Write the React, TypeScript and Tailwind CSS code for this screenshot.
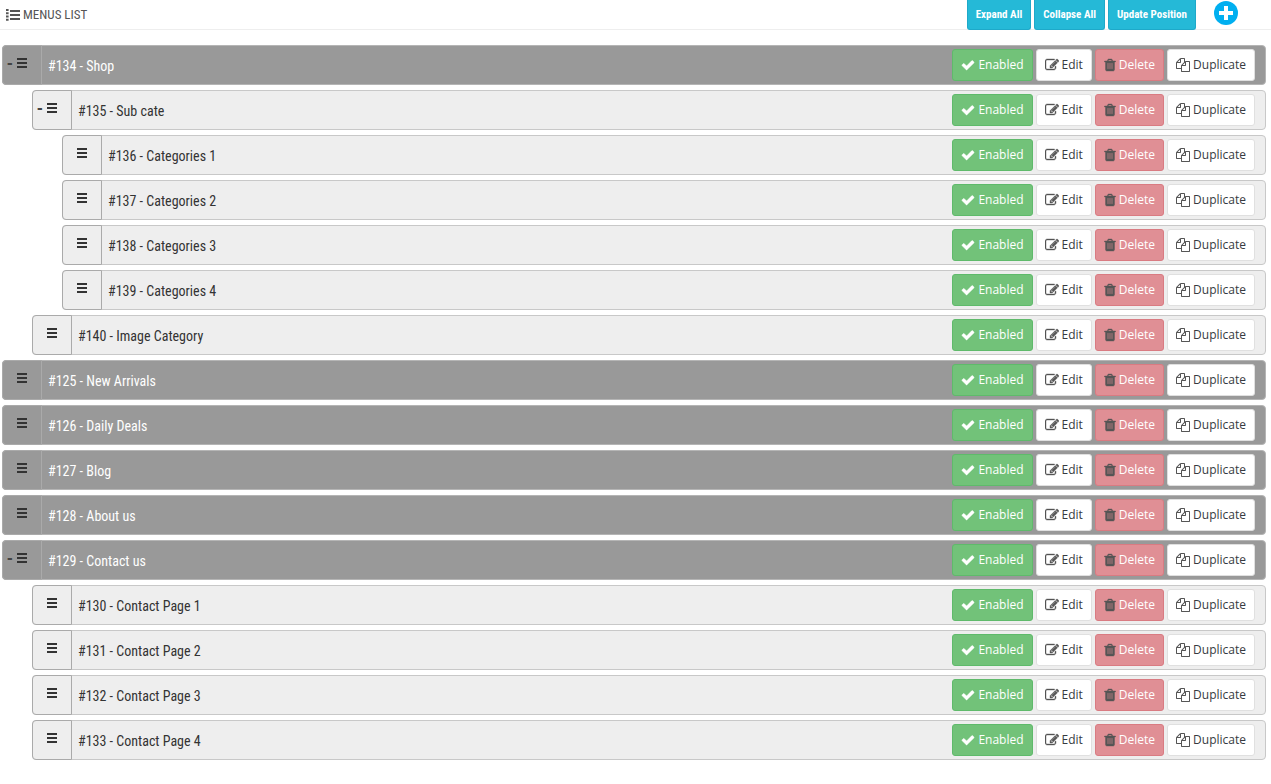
import React, { useState } from 'react';

interface MenuItem {
  id: number;
  name: string;
  children?: MenuItem[];
}

const MENUS: MenuItem[] = [
  {
    id: 134,
    name: 'Shop',
    children: [
      {
        id: 135,
        name: 'Sub cate',
        children: [
          { id: 136, name: 'Categories 1' },
          { id: 137, name: 'Categories 2' },
          { id: 138, name: 'Categories 3' },
          { id: 139, name: 'Categories 4' },
        ],
      },
      { id: 140, name: 'Image Category' },
    ],
  },
  { id: 125, name: 'New Arrivals' },
  { id: 126, name: 'Daily Deals' },
  { id: 127, name: 'Blog' },
  { id: 128, name: 'About us' },
  {
    id: 129,
    name: 'Contact us',
    children: [
      { id: 130, name: 'Contact Page 1' },
      { id: 131, name: 'Contact Page 2' },
      { id: 132, name: 'Contact Page 3' },
      { id: 133, name: 'Contact Page 4' },
    ],
  },
];

const PARENT_IDS = [134, 135, 129];

const ICONS = {
  check:
    'M1671 566q0 40-28 68l-724 724-136 136q-28 28-68 28t-68-28l-136-136-362-362q-28-28-28-68t28-68l136-136q28-28 68-28t68 28l294 295 656-657q28-28 68-28t68 28l136 136q28 28 28 68z',
  edit:
    'M888 1184l116-116-152-152-116 116v56h96v96h56zm440-720q-16-16-33 1l-350 350q-17 17-1 33t33-1l350-350q17-17 1-33zm80 594v190q0 119-84.5 203.5t-203.5 84.5h-832q-119 0-203.5-84.5t-84.5-203.5v-832q0-119 84.5-203.5t203.5-84.5h832q63 0 117 25 15 7 18 23 3 17-9 29l-49 49q-14 14-32 8-23-6-45-6h-832q-66 0-113 47t-47 113v832q0 66 47 113t113 47h832q66 0 113-47t47-113v-126q0-13 9-22l64-64q15-15 35-7t20 29zm-96-738l288 288-672 672h-288v-288zm444 132l-92 92-288-288 92-92q28-28 68-28t68 28l152 152q28 28 28 68t-28 68z',
  trash:
    'M704 1376v-704q0-14-9-23t-23-9h-64q-14 0-23 9t-9 23v704q0 14 9 23t23 9h64q14 0 23-9t9-23zm256 0v-704q0-14-9-23t-23-9h-64q-14 0-23 9t-9 23v704q0 14 9 23t23 9h64q14 0 23-9t9-23zm256 0v-704q0-14-9-23t-23-9h-64q-14 0-23 9t-9 23v704q0 14 9 23t23 9h64q14 0 23-9t9-23zm-544-992h448l-48-117q-7-9-17-11h-317q-10 2-17 11zm928 32v64q0 14-9 23t-23 9h-96v948q0 83-47 143.5t-113 60.5h-832q-66 0-113-58.5t-47-141.5v-952h-96q-14 0-23-9t-9-23v-64q0-14 9-23t23-9h309l70-167q15-37 54-63t79-26h320q40 0 79 26t54 63l70 167h309q14 0 23 9t9 23z',
  copy:
    'M1696 384q40 0 68 28t28 68v1216q0 40-28 68t-68 28h-960q-40 0-68-28t-28-68v-288h-544q-40 0-68-28t-28-68v-672q0-40 20-88t48-76l408-408q28-28 76-48t88-20h416q40 0 68 28t28 68v328q68-40 128-40h416zm-544 213l-299 299h299v-299zm-640-384l-299 299h299v-299zm196 647l316-316v-416h-384v416q0 40-28 68t-68 28h-416v640h512v-256q0-40 20-88t48-76zm956 804v-1152h-384v416q0 40-28 68t-68 28h-416v640h896z',
};

const Icon: React.FC<{ name: keyof typeof ICONS; className?: string; viewBox?: string; weight?: number }> = ({
  name,
  className,
  viewBox = '0 0 1792 1792',
  weight = 0,
}) => (
  <svg
    viewBox={viewBox}
    fill="currentColor"
    stroke="currentColor"
    strokeWidth={weight}
    aria-hidden="true"
    className={`shrink-0 ${className}`}
  >
    <path d={ICONS[name]} />
  </svg>
);

const RowActions: React.FC<{ enabled: boolean; onToggle: () => void }> = ({ enabled, onToggle }) => {
  const base = 'flex h-8 items-center gap-[3px] rounded-[3px] border px-2 text-[12px] leading-5 whitespace-nowrap cursor-pointer';

  return (
    <div className="flex shrink-0 items-center gap-[3px] pr-2.5 font-['Open_Sans',sans-serif]">
      <button onClick={onToggle} className={`${base} border-[#5fba6b] bg-[#72c279] text-white`}>
        <Icon name="check" weight={60} className="size-3.5" />
        {enabled ? 'Enabled' : 'Disabled'}
      </button>
      <button className={`${base} border-[#e0e0e0] bg-white text-[#363a41]`}>
        <Icon name="edit" weight={50} className="size-3.5 text-[#555]" />
        Edit
      </button>
      <button className={`${base} border-[#d97b82] bg-[#e08f95] text-white`}>
        <Icon name="trash" weight={50} viewBox="160 0 1472 1792" className="h-3.5 w-3 text-[#555]" />
        Delete
      </button>
      <button className={`${base} border-[#e0e0e0] bg-white text-[#363a41]`}>
        <Icon name="copy" className="size-3.5 text-[#555]" />
        Duplicate
      </button>
    </div>
  );
};

interface MenuRowProps {
  item: MenuItem;
  level: number;
  collapsed: number[];
  disabled: number[];
  onCollapse: (id: number) => void;
  onToggle: (id: number) => void;
}

const MenuRow: React.FC<MenuRowProps> = (props) => {
  const { item, level, collapsed, disabled, onCollapse, onToggle } = props;
  const root = level === 0;
  const closed = collapsed.includes(item.id);

  return (
    <li>
      <div
        className={`mb-[5px] flex h-10 items-stretch rounded-[4px] border ${
          root ? 'border-[#b5b5b5] bg-[#999] text-white' : 'border-[#c8c8c8] bg-[#eee] text-[#333]'
        }`}
      >
        <div
          className={`-my-px -ml-px flex w-10 shrink-0 items-center rounded-l-[4px] border border-[#aaa] pb-1 pl-1 ${
            root ? 'bg-[#999]' : 'bg-[#eee]'
          }`}
        >
          <div className="w-2.5">
            {item.children && (
              <button
                aria-label={closed ? 'Expand' : 'Collapse'}
                onClick={() => onCollapse(item.id)}
                className="block font-['Liberation_Sans',sans-serif] text-[17px] leading-5 font-bold text-[#444] cursor-pointer"
              >
                {closed ? '+' : '-'}
              </button>
            )}
          </div>
          <svg viewBox="0 0 10 10" fill="#333" shapeRendering="crispEdges" aria-hidden="true" className="size-2.5 cursor-move">
            <path d="M0 0h10v2H0zM0 4h10v2H0zM0 8h10v2H0z" />
          </svg>
        </div>
        <div className="flex min-w-0 flex-1 items-center truncate pt-0.5 pl-1.5">
          #{item.id} - {item.name}
        </div>
        <RowActions enabled={!disabled.includes(item.id)} onToggle={() => onToggle(item.id)} />
      </div>

      {item.children && !closed && (
        <ul className="pl-[30px]">
          {item.children.map((child) => (
            <MenuRow key={child.id} {...props} item={child} level={level + 1} />
          ))}
        </ul>
      )}
    </li>
  );
};

const App: React.FC = () => {
  const [collapsed, setCollapsed] = useState<number[]>([]);
  const [disabled, setDisabled] = useState<number[]>([]);

  const flip = (list: number[], id: number) =>
    list.includes(id) ? list.filter((x) => x !== id) : [...list, id];

  const toolButton =
    'h-[30px] rounded-b-[3px] border border-t-0 border-[#1ea9c9] bg-[#25b9d7] px-2 text-[11px] font-bold text-white cursor-pointer';

  return (
    <div className="min-h-screen bg-white pb-5 font-['Ubuntu_Condensed','Roboto_Condensed',sans-serif] text-[14px] leading-5">
      <header className="flex h-[30px] items-start justify-between border-b border-[#eee] pr-[33px]">
        <h1 className="flex h-[30px] items-center gap-[3px] pl-1.5 text-[13px] text-[#555]">
          <svg viewBox="0 0 14 12" fill="#555" aria-hidden="true" className="h-3 w-3.5">
            <path d="M0 0h2.6v2H0zM0 3.2h2.6v2H0zM0 6.5h2.6v2H0zM0 9.8h2.6v2H0zM4 1h10v2H4zM4 5h10v2H4zM4 9h10v2H4z" />
          </svg>
          MENUS LIST
        </h1>
        <div className="flex items-start gap-[3px]">
          <button className={toolButton} onClick={() => setCollapsed([])}>
            Expand All
          </button>
          <button className={toolButton} onClick={() => setCollapsed(PARENT_IDS)}>
            Collapse All
          </button>
          <button className={toolButton}>Update Position</button>
          <button aria-label="Add menu" className="ml-[15px] mt-px cursor-pointer">
            <svg viewBox="0 0 24 24" aria-hidden="true" className="size-6">
              <circle cx="12" cy="12" r="12" fill="#00aff0" />
              <path d="M12 5v14M5 12h14" stroke="#fff" strokeWidth="4" />
            </svg>
          </button>
        </div>
      </header>

      <ul className="pt-[15px] pr-[5px] pl-0.5">
        {MENUS.map((item) => (
          <MenuRow
            key={item.id}
            item={item}
            level={0}
            collapsed={collapsed}
            disabled={disabled}
            onCollapse={(id) => setCollapsed((prev) => flip(prev, id))}
            onToggle={(id) => setDisabled((prev) => flip(prev, id))}
          />
        ))}
      </ul>
    </div>
  );
};

export default App;
